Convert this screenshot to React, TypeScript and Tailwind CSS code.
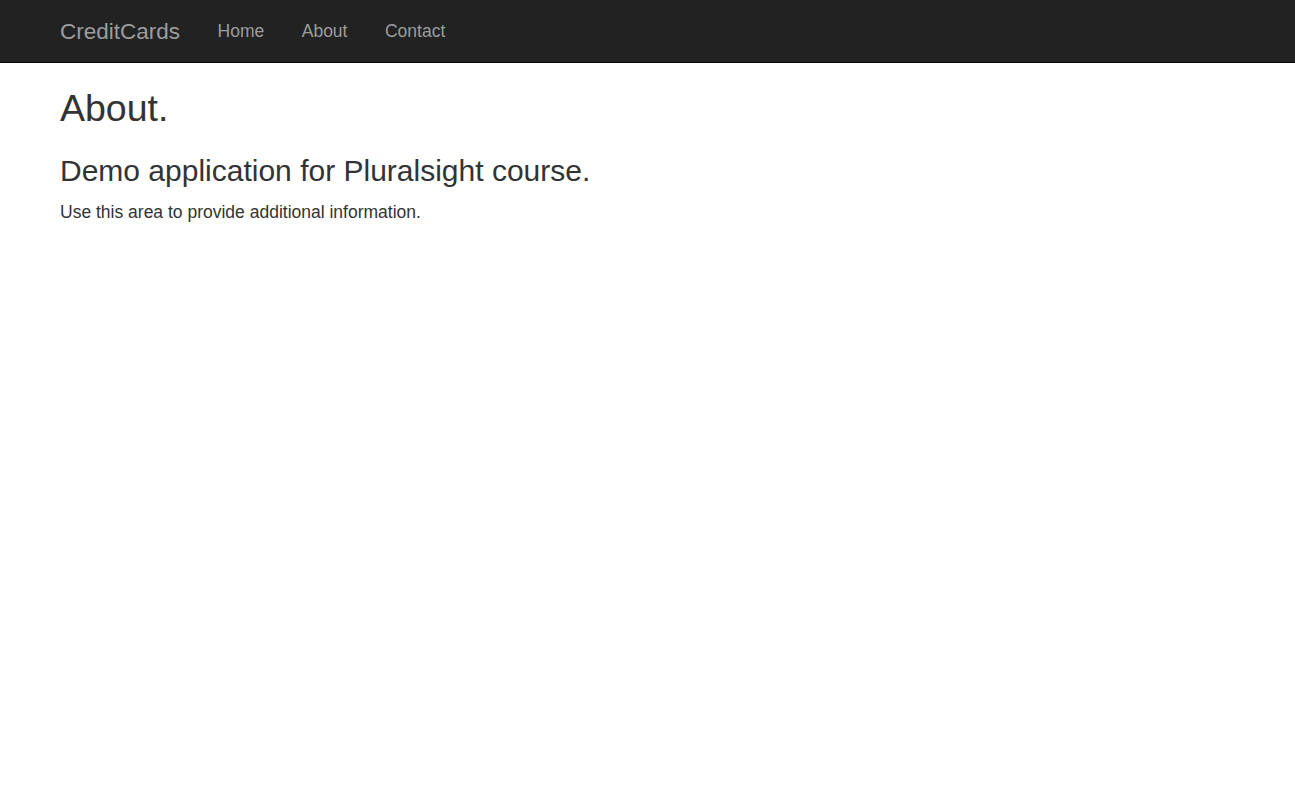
export default function App() {
  const font = { fontFamily: '"Liberation Sans", Arial, Helvetica, sans-serif' };
  return (
    <div className="min-h-[802px] bg-white text-[#333333]" style={font}>
      <nav className="h-[63px] bg-[#222222] border-b border-[#080808]">
        <div className="mx-auto w-[1212.5px] px-[18.75px] flex items-start">
          <a className="ml-[-18.75px] px-[18.75px] py-[18.75px] text-[22.5px] leading-[25px] text-[#9d9d9d] h-[62.5px]">
            CreditCards
          </a>
          <ul className="flex">
            {["Home", "About", "Contact"].map((l) => (
              <li key={l}>
                <a className="block px-[18.75px] py-[18.75px] text-[17.5px] leading-[25px] text-[#9d9d9d]">
                  {l}
                </a>
              </li>
            ))}
          </ul>
        </div>
      </nav>
      <div className="mx-auto w-[1212.5px] px-[18.75px]">
        <h2 className="mt-[25px] mb-[12.5px] text-[37.5px] leading-[1.1] font-normal">About.</h2>
        <h3 className="mt-[25px] mb-[12.5px] text-[30px] leading-[1.1] font-normal">
          Demo application for Pluralsight course.
        </h3>
        <p className="mb-[12.5px] text-[17.5px] leading-[25px]">Use this area to provide additional information.</p>
      </div>
    </div>
  );
}
